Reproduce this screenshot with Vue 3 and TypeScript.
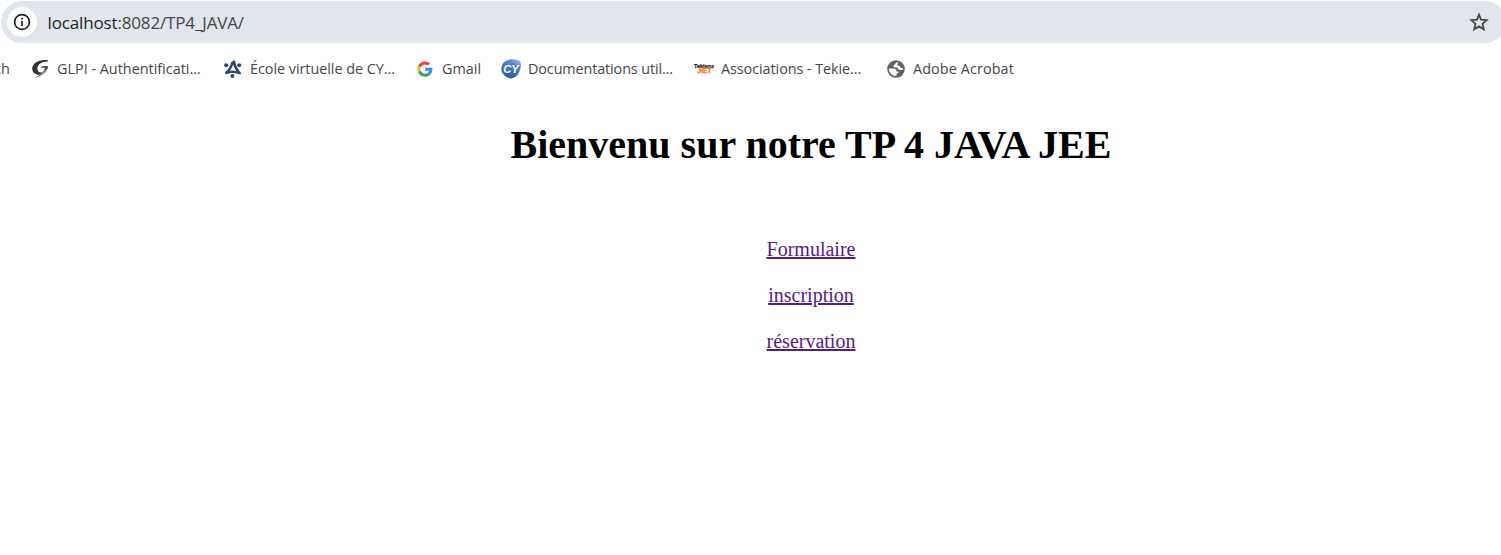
<script setup lang="ts">
interface Bookmark {
  id: string
  label: string
}

const bookmarks: Bookmark[] = [
  { id: 'glpi', label: 'GLPI - Authentificati...' },
  { id: 'ecole', label: 'École virtuelle de CY...' },
  { id: 'gmail', label: 'Gmail' },
  { id: 'docs', label: 'Documentations util...' },
  { id: 'tekiens', label: 'Associations - Tekie...' },
  { id: 'adobe', label: 'Adobe Acrobat' },
]

const links: string[] = ['Formulaire', 'inscription', 'réservation']
</script>

<template>
  <div class="window">
    <header class="address-bar">
      <span class="site-info">
        <svg width="18" height="18" viewBox="0 0 18 18">
          <circle cx="9" cy="9" r="7.4" fill="none" stroke="#1f1f1f" stroke-width="1.7" />
          <path d="M9 8.1V13" stroke="#1f1f1f" stroke-width="1.7" />
          <circle cx="9" cy="5.7" r="1" fill="#1f1f1f" />
        </svg>
      </span>
      <span class="url"><span class="host">localhost</span>:8082/TP4_JAVA/</span>
      <svg class="star" width="20" height="20" viewBox="0 0 20 20">
        <path d="M10 2.6L12.1 7.7L17.7 8.2L13.5 11.9L14.8 17.3L10 14.4L5.2 17.3L6.5 11.9L2.3 8.2L7.9 7.7Z" fill="none" stroke="#474747" stroke-width="1.8" />
      </svg>
    </header>

    <nav class="bookmarks">
      <span class="label cut">ch</span>
      <a v-for="b in bookmarks" :key="b.id" class="bookmark" :class="b.id">
        <svg class="icon" width="20" height="20" viewBox="0 0 20 20">
          <g v-if="b.id === 'glpi'">
            <path d="M15.8 1.2C9 .6.3 3 .2 9.6C.3 14.6 4.5 16.6 9.8 15.6L10.2 13.4C6.8 13.9 5.2 12 5.4 9C5.8 4.8 10 2.8 15.8 2.5Z" fill="#333" />
            <path d="M12.8 8H16C15.4 13 9.8 17.7 2 18.9C6.8 16.8 11.6 14 12.8 8Z" fill="#858585" />
            <path d="M8.8 8.7Q9.6 6.9 11.4 6.9H16L15.6 9.6L12.8 11.5L13 8.7Z" fill="#555" />
          </g>
          <g v-else-if="b.id === 'ecole'" fill="none" stroke="#33476d" stroke-linecap="round">
            <path d="M9.2 4.2Q8 9.5 3.2 13.6M4 13.9Q10 11.4 16.8 14.2M15.8 13Q12 9 11 2.8" stroke-width="2.5" />
            <path d="M9.2 4L11 2.8" stroke-width="2.4" />
            <g fill="#33476d" stroke="none">
              <circle cx="3.2" cy="6.2" r="2" />
              <circle cx="16.2" cy="6.2" r="2" />
              <circle cx="9.4" cy="16.9" r="2" />
            </g>
          </g>
          <g v-else-if="b.id === 'gmail'" transform="translate(.3 2.4) scale(.32)">
            <path fill="#ea4335" d="M24 9.5c3.54 0 6.71 1.22 9.21 3.6l6.85-6.85C35.9 2.38 30.47 0 24 0 14.62 0 6.51 5.38 2.56 13.22l7.98 6.19C12.43 13.72 17.74 9.5 24 9.5z" />
            <path fill="#4285f4" d="M46.98 24.55c0-1.57-.15-3.09-.38-4.55H24v9.02h12.94c-.58 2.96-2.26 5.48-4.78 7.18l7.73 6c4.51-4.18 7.09-10.36 7.09-17.65z" />
            <path fill="#fbbc05" d="M10.53 28.59c-.48-1.45-.76-2.99-.76-4.59s.27-3.14.76-4.59l-7.98-6.19C.92 16.46 0 20.12 0 24s.92 7.54 2.56 10.78l7.97-6.19z" />
            <path fill="#34a853" d="M24 48c6.48 0 11.93-2.13 15.89-5.81l-7.73-6c-2.15 1.45-4.92 2.3-8.16 2.3-6.26 0-11.57-4.22-13.47-9.91l-7.98 6.19C6.51 42.62 14.62 48 24 48z" />
          </g>
          <g v-else-if="b.id === 'docs'">
            <defs>
              <linearGradient id="globe" x1="1" y1="0" x2=".4" y2="1">
                <stop offset="0" stop-color="#b4cdec" />
                <stop offset=".35" stop-color="#5684c8" />
                <stop offset="1" stop-color="#2458a8" />
              </linearGradient>
            </defs>
            <path d="M10 .3Q17.5-.6 19.5 3.2Q20.6 7 18.7 11.8Q16.3 19 10 19.5Q2.5 18.5.5 11.5Q-.8 2.5 10 .3Z" fill="url(#globe)" />
            <text x="2.2" y="13.6" font-family="Liberation Sans, Arial, sans-serif" font-size="10.5" font-weight="bold" font-style="italic" textLength="15.5" lengthAdjust="spacingAndGlyphs" fill="#fff">CY</text>
          </g>
          <g v-else-if="b.id === 'tekiens'" font-family="Liberation Sans, Arial, sans-serif" font-weight="bold">
            <text x="0" y="9.4" font-size="5.6" textLength="20" lengthAdjust="spacingAndGlyphs" fill="#222" stroke="#222" stroke-width=".25">Tekiens</text>
            <text x="3.2" y="14.4" font-size="6.4" textLength="14" lengthAdjust="spacingAndGlyphs" fill="#f58220" stroke="#f58220" stroke-width=".4">.NET</text>
          </g>
          <g v-else>
            <circle cx="9" cy="10" r="8.8" fill="#5f6368" />
            <path d="M10.6 2.9C8.6 3.3 8.2 5.4 6.8 6.3C6 7.8 7.3 8.6 9.2 8.4C11.4 8.3 10.7 10.6 12.6 10.9C13.9 11.1 14.9 10.3 16 10.8L16.1 9.1C14.6 9.4 13.9 8.8 13.1 7.8C12.4 6.8 10.8 6.9 10.3 6.1C9.8 5.1 11.6 4.6 10.6 2.9Z" fill="#fff" />
            <path d="M1.9 9.6H5.8C8.3 9.6 9.6 10.7 9.6 12.6H11.6C11.7 14.2 10.9 14.7 9.4 14.8V17.1C5.2 17.3 1.9 14 1.9 9.6Z" fill="#fff" />
          </g>
        </svg>
        <span class="label">{{ b.label }}</span>
      </a>
    </nav>

    <main class="page">
      <h1>Bienvenu sur notre TP 4 JAVA JEE</h1>
      <div class="links">
        <a v-for="link in links" :key="link" href="#">{{ link }}</a>
      </div>
    </main>
  </div>
</template>

<style>
body {
  margin: 0;
  background: #fff;
  overflow: hidden;
}
</style>

<style scoped>
.window {
  width: 1501px;
  height: 555px;
  overflow: hidden;
  background: #fff;
}
.address-bar {
  box-sizing: border-box;
  display: flex;
  align-items: center;
  width: 1505px;
  height: 42px;
  margin: 1px 0 0 1px;
  padding: 0 17px 0 6px;
  border-radius: 21px;
  background: #e1e5ec;
}
.site-info {
  display: flex;
  align-items: center;
  justify-content: center;
  width: 30px;
  height: 30px;
  border-radius: 50%;
  background: #fff;
}
.url {
  margin-left: 10.5px;
  padding-top: 1px;
  font: 17px/24px "Open Sans", "Noto Sans", sans-serif;
  letter-spacing: -0.15px;
  color: #474747;
  white-space: nowrap;
}
.host {
  color: #1f1f1f;
}
.star {
  margin-left: auto;
}
.bookmarks {
  display: grid;
  grid-template-columns: 32px 191px 194px 84px 193px 193px 140px;
  align-items: center;
  height: 52px;
}
.bookmark {
  display: flex;
  align-items: center;
  gap: 6px;
}
.icon {
  flex: none;
}
.label {
  font: 14.4px/20px "Open Sans", "Noto Sans", sans-serif;
  color: #474747;
  white-space: nowrap;
}
.glpi,
.gmail {
  gap: 5px;
}
.ecole,
.docs,
.tekiens {
  gap: 7px;
}
.ecole .label {
  letter-spacing: -0.04px;
}
.docs .label {
  letter-spacing: -0.12px;
}
.tekiens .label {
  letter-spacing: -0.07px;
}
.adobe .label {
  letter-spacing: 0.1px;
}
.cut {
  justify-self: start;
  margin-left: -6px;
}
.page {
  width: 1622px;
  padding-top: 27px;
  font-family: "Liberation Serif", "Times New Roman", serif;
  text-align: center;
}
h1 {
  margin: 0;
  font-size: 40px;
  line-height: 46px;
  color: #000;
}
.links {
  display: flex;
  flex-direction: column;
  align-items: center;
  gap: 23px;
  margin-top: 70px;
  font-size: 20px;
  line-height: 23px;
}
.links a {
  color: #551a8b;
  text-decoration-thickness: 2px;
  text-underline-offset: 1px;
}
</style>
